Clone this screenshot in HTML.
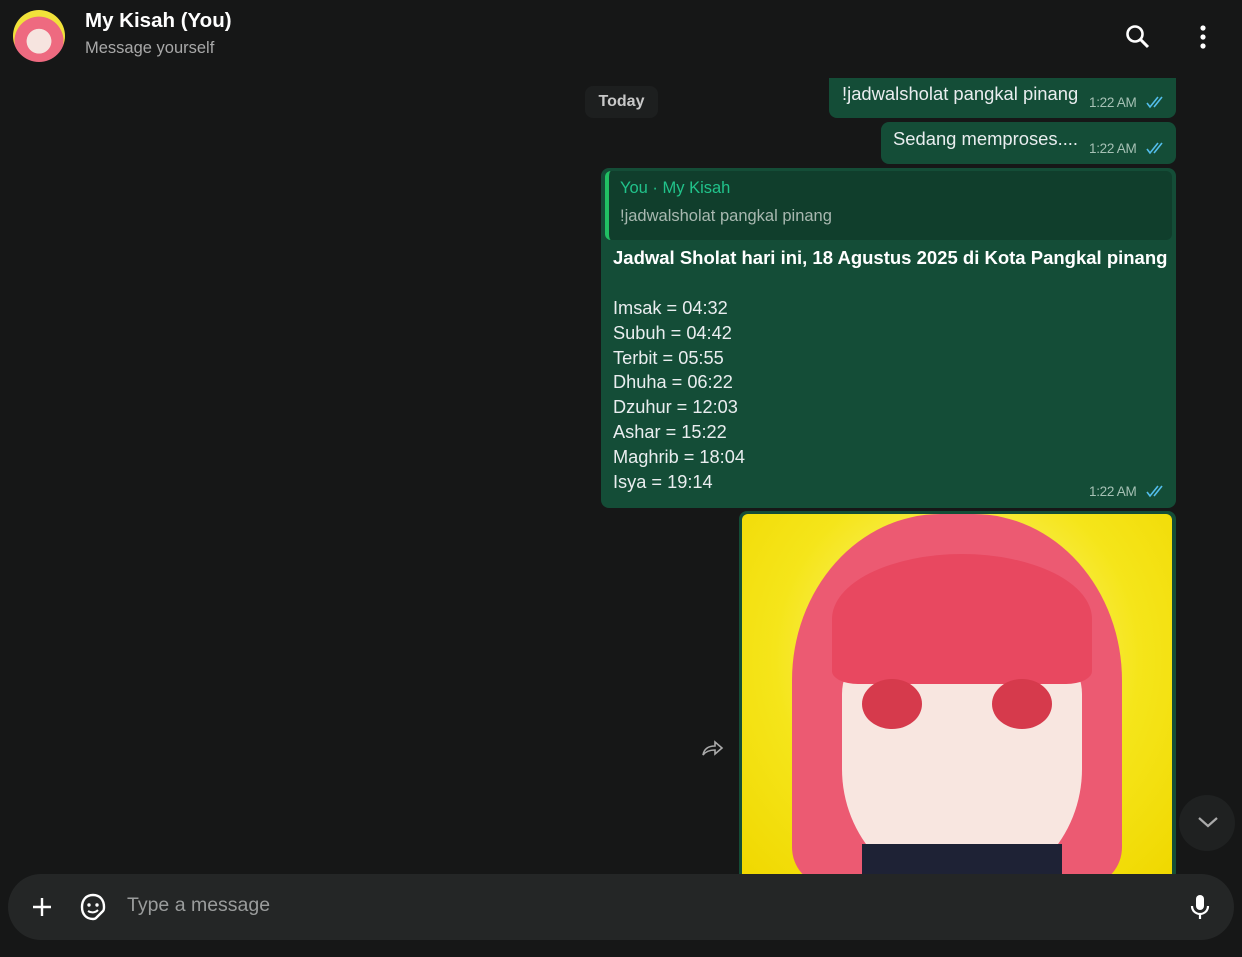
<!DOCTYPE html>
<html><head><meta charset="utf-8"><style>
*{margin:0;padding:0;box-sizing:border-box}
body{width:1242px;height:957px;overflow:hidden;background:#161717;font-family:"Liberation Sans",sans-serif;position:relative;color:#e9edef}
.hdr{position:absolute;left:0;top:0;width:1242px;height:78px;background:#161717}
.av{position:absolute;left:13px;top:10px;width:52px;height:52px;border-radius:50%;background:radial-gradient(circle at 50% 60%,#f6e4df 0 30%,#ee6a80 31% 60%,#f1e23a 61%);overflow:hidden}
.name{position:absolute;left:85px;top:9px;font-size:20.5px;font-weight:bold;color:#fff}
.sub{position:absolute;left:85px;top:39px;font-size:16.5px;color:#a8a8a8}
.b{position:absolute;background:#144d37;border-radius:8px;color:#e9edef}
.t{font-size:13.5px;color:#a6c1b5;position:absolute;letter-spacing:-0.3px}
.today{position:absolute;left:585px;top:86px;width:73px;height:32px;background:#1d1f1f;border-radius:8px;color:#c8c8c8;font-weight:bold;font-size:16px;text-align:center;line-height:32px}
.inp{position:absolute;left:8px;top:874px;width:1226px;height:66px;background:#242626;border-radius:33px}
</style></head><body>
<div class="hdr">
<div class="av"></div>
<div class="name">My Kisah (You)</div>
<div class="sub">Message yourself</div>
<svg style="position:absolute;left:1125px;top:24px" width="26" height="26" viewBox="0 0 26 26"><circle cx="10" cy="10" r="7.5" fill="none" stroke="#fff" stroke-width="2.6"/><path d="M15.5 15.5 L23 23" stroke="#fff" stroke-width="3"/></svg>
<svg style="position:absolute;left:1197px;top:24px" width="12" height="26"><circle cx="6" cy="4" r="2.6" fill="#fff"/><circle cx="6" cy="13" r="2.6" fill="#fff"/><circle cx="6" cy="22" r="2.6" fill="#fff"/></svg>
</div>
<div class="today">Today</div>
<div class="b" style="left:829px;top:78px;width:347px;height:40px;border-radius:0 0 8px 8px"><span style="position:absolute;left:13px;top:5px;font-size:18.4px">!jadwalsholat pangkal pinang</span><span class="t" style="left:260px;top:17px">1:22 AM</span></div>
<div class="b" style="left:881px;top:122px;width:295px;height:42px"><span style="position:absolute;left:12px;top:6px;font-size:18.4px">Sedang memproses....</span><span class="t" style="left:208px;top:19px">1:22 AM</span></div>
<div class="b" style="left:601px;top:168px;width:575px;height:340px">
<div style="position:absolute;left:4px;top:3px;width:567px;height:69px;background:#103e2c;border-radius:6px;border-left:4px solid #21c063">
<div style="position:absolute;left:11px;top:8px;font-size:16.5px;color:#21c38b">You · My Kisah</div>
<div style="position:absolute;left:11px;top:36px;font-size:16.5px;color:#a8b8b0">!jadwalsholat pangkal pinang</div></div>
<div style="position:absolute;left:12px;top:79px;font-size:18.5px;font-weight:bold;color:#fff;white-space:nowrap">Jadwal Sholat hari ini, 18 Agustus 2025 di Kota Pangkal pinang</div>
<div style="position:absolute;left:12px;top:128px;font-size:18.2px;line-height:24.8px">Imsak = 04:32<br>Subuh = 04:42<br>Terbit = 05:55<br>Dhuha = 06:22<br>Dzuhur = 12:03<br>Ashar = 15:22<br>Maghrib = 18:04<br>Isya = 19:14</div>
<span class="t" style="left:488px;top:316px">1:22 AM</span></div>
<div class="b" style="left:739px;top:511px;width:437px;height:380px;border-radius:8px 8px 0 0"></div>
<div style="position:absolute;left:742px;top:514px;width:430px;height:360px;overflow:hidden;border-radius:6px 6px 0 0;background:radial-gradient(ellipse at 50% 40%,#fff8a0,#f5e51a 60%,#f0d800)">
<div style="position:absolute;left:50px;top:0;width:330px;height:370px;background:#ec5a72;border-radius:45% 45% 10% 10%"></div>
<div style="position:absolute;left:100px;top:130px;width:240px;height:250px;background:#f8e6e0;border-radius:20% 20% 50% 50%"></div>
<div style="position:absolute;left:90px;top:40px;width:260px;height:130px;background:#e84860;border-radius:50% 50% 10% 10%"></div>
<div style="position:absolute;left:120px;top:165px;width:60px;height:50px;background:#d63a4c;border-radius:50%"></div>
<div style="position:absolute;left:250px;top:165px;width:60px;height:50px;background:#d63a4c;border-radius:50%"></div>
<div style="position:absolute;left:120px;top:330px;width:200px;height:40px;background:#1e2235"></div>
</div>
<svg style="position:absolute;left:1145px;top:95px" width="22" height="14" viewBox="0 0 22 14"><path d="M2 8l3 4L13 2M9 12L17 2" stroke="#53bdeb" stroke-width="1.6" fill="none"/></svg>
<svg style="position:absolute;left:1145px;top:141px" width="22" height="14" viewBox="0 0 22 14"><path d="M2 8l3 4L13 2M9 12L17 2" stroke="#53bdeb" stroke-width="1.6" fill="none"/></svg>
<svg style="position:absolute;left:1145px;top:484px" width="22" height="14" viewBox="0 0 22 14"><path d="M2 8l3 4L13 2M9 12L17 2" stroke="#53bdeb" stroke-width="1.6" fill="none"/></svg>
<svg style="position:absolute;left:701px;top:739px" width="24" height="18" viewBox="0 0 24 18"><path d="M2 16c1-6 5-9 12-9V3l7 6-7 6v-4c-5 0-9 1-12 5z" fill="none" stroke="#aaa" stroke-width="1.6"/></svg>
<div style="position:absolute;left:1179px;top:795px;width:56px;height:56px;border-radius:50%;background:#1f2121"></div>
<svg style="position:absolute;left:1197px;top:815px" width="22" height="14"><path d="M2 3l9 8 9-8" stroke="#aaa" stroke-width="2.2" fill="none"/></svg>
<div class="inp">
<svg style="position:absolute;left:23px;top:22px" width="22" height="22"><path d="M11 2v18M2 11h18" stroke="#fff" stroke-width="2.4"/></svg>
<svg style="position:absolute;left:71px;top:18px" width="28" height="30" viewBox="0 0 28 30"><path d="M14 3C7 3 3 8 3 15s4 12 11 12c1 0 2 0 3-1l7-7c1-1 1-2 1-4 0-7-4-12-11-12z" fill="none" stroke="#fff" stroke-width="2.4"/><circle cx="10" cy="13" r="1.7" fill="#fff"/><circle cx="18" cy="13" r="1.7" fill="#fff"/><path d="M9 19c3 2 7 2 10-1" stroke="#fff" stroke-width="2" fill="none"/></svg>
<div style="position:absolute;left:119px;top:20px;font-size:19.5px;color:#9a9c9c">Type a message</div>
<svg style="position:absolute;left:1182px;top:19px" width="20" height="28" viewBox="0 0 20 28"><rect x="6" y="2" width="8" height="15" rx="4" fill="#fff"/><path d="M2 13c0 5 4 8 8 8s8-3 8-8M10 21v5" stroke="#fff" stroke-width="2.2" fill="none"/></svg>
</div>
</body></html>
